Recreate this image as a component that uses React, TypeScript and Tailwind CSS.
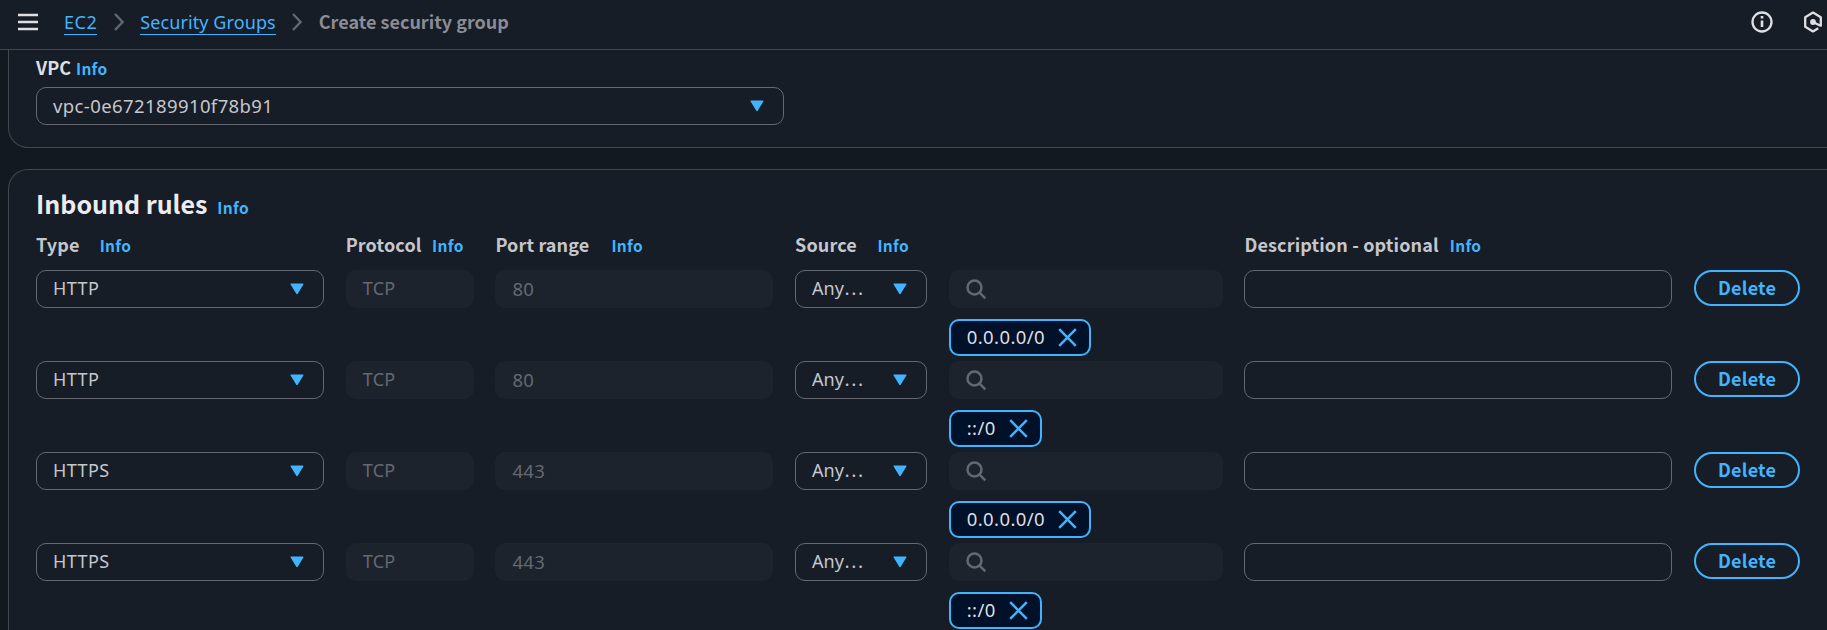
import React from "react";

const rules = [
  { type: "HTTP", port: "80", cidr: "0.0.0.0/0" },
  { type: "HTTP", port: "80", cidr: "::/0" },
  { type: "HTTPS", port: "443", cidr: "0.0.0.0/0" },
  { type: "HTTPS", port: "443", cidr: "::/0" },
];

function Info({ className = "" }: { className?: string }) {
  return <a className={`font-['Noto_Sans_CJK_SC',sans-serif] text-[15.5px] leading-5 font-bold tracking-[0.3px] text-[#42b4ff] ${className}`}>Info</a>;
}

function Caret() {
  return (
    <svg width="14" height="12" viewBox="0 0 14 12" className="shrink-0 text-[#42b4ff]">
      <path d="M1.3 1.2h11.4L7 10.4z" fill="currentColor" stroke="currentColor" strokeWidth="1.6" strokeLinejoin="round" />
    </svg>
  );
}

function Chevron() {
  return (
    <svg width="10" height="18" viewBox="0 0 10 18" className="shrink-0" fill="none" stroke="#656871" strokeWidth="2.3">
      <path d="M1 1l7.6 8L1 17" />
    </svg>
  );
}

function Select({ children, className = "" }: { children: React.ReactNode; className?: string }) {
  return (
    <div className={`flex h-[38px] items-center justify-between rounded-[10px] border border-[#656871] pl-4 pr-[19px] text-[#c6c6cd] ${className}`}>
      <span className="h-[26px]">{children}</span>
      <Caret />
    </div>
  );
}

function Disabled({ children }: { children: React.ReactNode }) {
  return <div className="flex h-[38px] items-center rounded-[10px] bg-[#1c232d] pl-[17px] text-[#656871]">{children}</div>;
}

function Token({ label }: { label: string }) {
  return (
    <div className="mt-[11px] flex h-[37px] w-fit items-center gap-[13px] rounded-[10px] border-2 border-[#42b4ff] bg-[#001129] pl-4 pr-3 text-[#dedee3]">
      <span className="pb-[2px] text-[18.5px] tracking-[0.4px]">{label}</span>
      <svg width="19" height="19" viewBox="0 0 19 19" fill="none" stroke="#42b4ff" strokeWidth="2.5">
        <path d="M1.2 1.2l16.6 16.6M17.8 1.2L1.2 17.8" />
      </svg>
    </div>
  );
}

const columns = "grid grid-cols-[288px_128px_278px_132px_274px_428px_106px] gap-x-[21.7px]";

export default function App() {
  return (
    <div className="flex h-[630px] w-full flex-col overflow-hidden bg-[#131920] font-['Noto_Sans',sans-serif] text-[18px] leading-[25px]">
      <header className="flex h-[50px] shrink-0 items-center border-b border-[#424650] bg-[#161d26] pb-[5px] pl-[18px]">
        <svg width="20" height="18" viewBox="0 0 20 18" className="mr-[26px]" stroke="#dedee3" strokeWidth="2.6">
          <path d="M0 2h20M0 9h20M0 16h20" />
        </svg>
        <a className="mt-px h-[25px] border-b border-[#42b4ff] leading-[24px] tracking-[0.5px] text-[#42b4ff]">EC2</a>
        <span className="mx-[16.5px] flex"><Chevron /></span>
        <a className="mt-px h-[25px] border-b border-[#42b4ff] leading-[24px] tracking-[0.1px] text-[#42b4ff]">Security Groups</a>
        <span className="mx-[16.5px] flex"><Chevron /></span>
        <span className="pb-px font-['Noto_Sans_CJK_SC',sans-serif] font-bold text-[#8c8c94]">Create security group</span>
        <div className="ml-auto flex items-center gap-[30px] pr-[4px]">
          <svg width="22" height="22" viewBox="0 0 22 22" fill="none" stroke="#dedee3" strokeWidth="2.3">
            <circle cx="11" cy="11" r="9.5" />
            <path d="M11 9.5v6.5M11 5v2.6" strokeWidth="2.6" />
          </svg>
          <svg width="20" height="22" viewBox="0 0 20 22" fill="none" stroke="#dedee3" strokeWidth="2.3">
            <path d="M17.8 15.5V6.2L10 1.6 2.2 6.2v9.6l7.8 4.6 5.2-3.1M10 11l8 4" strokeLinejoin="round" />
            <circle cx="10" cy="11" r="2.9" fill="#dedee3" stroke="none" />
          </svg>
        </div>
      </header>

      <section className="ml-2 h-[98px] shrink-0 rounded-bl-[20px] border-b border-l border-[#424650] bg-[#161d26] pl-[27px] pt-[5px]">
        <div className="flex h-8 items-baseline gap-[5px]">
          <span className="font-['Noto_Sans_CJK_SC',sans-serif] font-bold text-[#dedee3]">VPC</span>
          <Info />
        </div>
        <Select className="w-[748px] text-[18.5px] tracking-[0.4px]">vpc-0e672189910f78b91</Select>
      </section>

      <section className="ml-2 mt-[21px] h-[500px] shrink-0 rounded-tl-[20px] border-l border-t border-[#424650] bg-[#161d26] pl-[27px] pt-[18px] font-['Noto_Sans_CJK_SC',sans-serif]">
        <div className="flex h-[44px] items-baseline gap-[10px]">
          <h2 className="text-[25px] leading-[30px] font-bold text-[#ebebf0]">Inbound rules</h2>
          <Info />
        </div>
        <div className={`${columns} h-[38px] font-bold tracking-[0.14px] text-[#c6c6cd]`}>
          <div className="flex items-baseline gap-[20px]">Type<Info /></div>
          <div className="flex items-baseline gap-[10.5px]">Protocol<Info /></div>
          <div className="flex items-baseline gap-[22px]">Port range<Info /></div>
          <div className="flex items-baseline gap-[20.5px]">Source<Info /></div>
          <div />
          <div className="flex items-baseline gap-[11px]">Description - optional<Info /></div>
        </div>
        {rules.map((rule, i) => (
          <div key={i} className={`${columns} h-[91px] items-start font-['Noto_Sans',sans-serif]`}>
            <Select className="tracking-[0.4px]">{rule.type}</Select>
            <Disabled><span className="pb-px tracking-[0.3px]">TCP</span></Disabled>
            <Disabled><span className="pb-px text-[18.5px] tracking-[0.4px]">{rule.port}</span></Disabled>
            <Select>Any<span className="font-['Noto_Sans_CJK_SC',sans-serif] leading-none">…</span></Select>
            <div>
              <Disabled>
                <svg width="21" height="21" viewBox="0 0 21 21" fill="none" stroke="#656871" strokeWidth="2.5">
                  <circle cx="8.5" cy="8.5" r="7" />
                  <path d="M13.3 13.3l6 6" />
                </svg>
              </Disabled>
              <Token label={rule.cidr} />
            </div>
            <div className="h-[38px] rounded-[10px] border border-[#656871]" />
            <button className="h-9 rounded-full border-2 border-[#42b4ff] pb-px font-['Noto_Sans_CJK_SC',sans-serif] font-bold tracking-[0.2px] text-[#42b4ff]">Delete</button>
          </div>
        ))}
      </section>
    </div>
  );
}
